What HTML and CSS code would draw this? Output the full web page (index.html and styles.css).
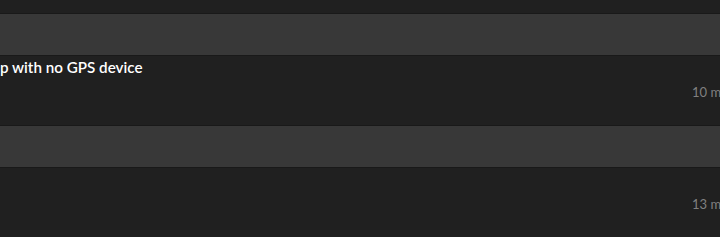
FILE: index.html
```html
<!DOCTYPE html>
<html>
<head>
<meta charset="utf-8">
<link rel="stylesheet" href="styles.css">
</head>
<body>
<div class="feed">
  <div class="item">
    <div class="band"></div>
    <div class="content">
      <div class="title">p with no GPS device</div>
      <div class="time">10 min ago</div>
    </div>
  </div>
  <div class="item">
    <div class="band"></div>
    <div class="content">
      <div class="title"></div>
      <div class="time">13 min ago</div>
    </div>
  </div>
</div>
</body>
</html>
```
FILE: styles.css
```css
html, body {
  margin: 0;
  padding: 0;
  background: #202020;
  overflow: hidden;
  height: 237px;
}
.feed {
  padding-top: 13px;
  width: 760px;
}
.item {
  display: flex;
  flex-direction: column;
}
.band {
  height: 41px;
  background: #383838;
  border-top: 1px solid #191919;
  border-bottom: 1px solid #191919;
}
.content {
  height: 69px;
  display: grid;
  grid-template-columns: 692px auto;
  grid-template-rows: auto auto;
  align-content: start;
}
.title {
  grid-column: 1;
  grid-row: 1;
  font-family: Lato, "Liberation Sans", sans-serif;
  font-weight: 600;
  font-size: 15.2px;
  line-height: 18px;
  color: #ffffff;
  padding-top: 2px;
  min-height: 18px;
  white-space: nowrap;
}
.time {
  grid-column: 2;
  grid-row: 2;
  font-family: Lato, "Liberation Sans", sans-serif;
  font-size: 13px;
  line-height: 15px;
  color: #808080;
  padding-top: 9px;
  white-space: nowrap;
}
```
